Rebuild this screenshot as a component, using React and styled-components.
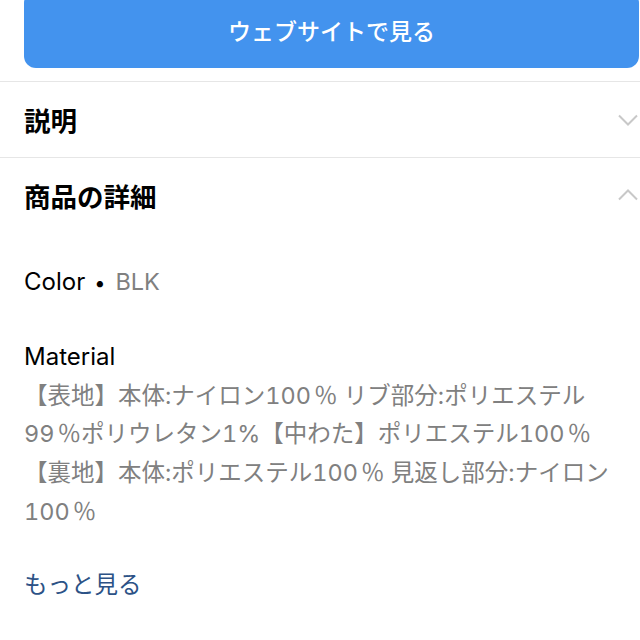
import React from "react";
import styled, { createGlobalStyle } from "styled-components";

const Global = createGlobalStyle`
body {
  margin: 0;
  background: #fff;
  overflow: hidden;
  font-family: "Inter", "Noto Sans CJK JP", sans-serif;
}
`;

const Page = styled.div`
width: 640px;
display: flex;
flex-direction: column;
`;

const ButtonWrap = styled.div`
padding: 0 1px 13px 24px;
margin-top: -9px;
`;

const SiteButton = styled.button`
width: 100%;
height: 77px;
border: none;
border-radius: 12px;
background: #4393ee;
color: #fff;
font-family: "Noto Sans CJK JP", sans-serif;
font-size: 23px;
font-weight: 500;
padding: 0;
`;

const Divider = styled.div`
height: 1px;
background: #e6e6e6;
`;

const SectionRow = styled.div`
height: ${(p) => p.h}px;
display: flex;
align-items: center;
justify-content: space-between;
padding: 0 2px 0 24px;
`;

const SectionTitle = styled.h2`
margin: 0;
font-family: "Noto Sans CJK JP", sans-serif;
font-size: 26.5px;
font-weight: 700;
color: #000;
`;

const Details = styled.div`
padding: 31px 24px 0 24px;
display: flex;
flex-direction: column;
`;

const Line = styled.div`
font-size: 23.5px;
line-height: 38.75px;
color: #808080;
font-variant-numeric: tabular-nums;
margin-top: ${(p) => p.gap || 0}px;
white-space: nowrap;
`;

const Label = styled.span`
font-size: 24px;
color: #000;
`;

const Bullet = styled.span`
color: #000;
font-size: 20px;
padding: 0 10px 0 9px;
`;

const Pct = styled.span`
display: inline-block;
width: 1em;
text-align: center;
padding-left: 3px;
`;

const MoreLink = styled.a`
font-family: "Noto Sans CJK JP", sans-serif;
font-size: 23.5px;
line-height: 38.75px;
color: #2c5286;
margin-top: 32px;
text-decoration: none;
`;

// "%" marks the full-width percent sign
const material = [
  ["【表地】本体:ナイロン100", "%", " リブ部分:ポリエステル"],
  ["99", "%", "ポリウレタン1%【中わた】ポリエステル100", "%"],
  ["【裏地】本体:ポリエステル100", "%", " 見返し部分:ナイロン"],
  ["100", "%"],
];

function Chevron({ up }) {
  return (
    <svg width="20" height="12" viewBox="0 0 20 12">
      <path
        d={up ? "M1 10.5 L10 1.5 L19 10.5" : "M1 1.5 L10 10.5 L19 1.5"}
        fill="none"
        stroke="#c8c8c8"
        strokeWidth="2"
      />
    </svg>
  );
}

export default function App() {
  return (
    <Page>
      <Global />
      <ButtonWrap>
        <SiteButton>ウェブサイトで見る</SiteButton>
      </ButtonWrap>
      <Divider />
      <SectionRow h={75}>
        <SectionTitle>説明</SectionTitle>
        <Chevron />
      </SectionRow>
      <Divider />
      <SectionRow h={74}>
        <SectionTitle>商品の詳細</SectionTitle>
        <Chevron up />
      </SectionRow>
      <Details>
        <Line>
          <Label>Color</Label>
          <Bullet>•</Bullet>BLK
        </Line>
        <Line gap={35}>
          <Label>Material</Label>
        </Line>
        {material.map((parts, i) => (
          <Line key={i}>
            {parts.map((p, j) => (p === "%" ? <Pct key={j}>％</Pct> : p))}
          </Line>
        ))}
        <MoreLink href="#">もっと見る</MoreLink>
      </Details>
    </Page>
  );
}
